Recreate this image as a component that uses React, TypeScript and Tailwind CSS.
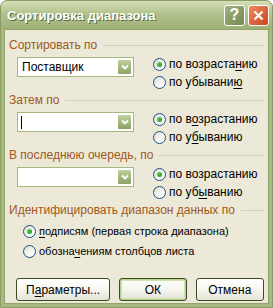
const font = { fontFamily: '"Liberation Sans", Arial, sans-serif' };

const Mn = ({ children }: { children: string }) => <span className="underline underline-offset-[2px]">{children}</span>;

const Radio = ({ checked, small, children }: { checked?: boolean; small?: boolean; children: React.ReactNode }) => (
  <div className="flex items-center h-[18px]">
    <div className="relative w-[13px] h-[13px] rounded-full border border-[#1c5180] bg-gradient-to-br from-[#dcd7cb] via-[#f4f3ee] to-white shrink-0">
      {checked && (
        <div className="absolute left-[3px] top-[3px] w-[5px] h-[5px] rounded-full bg-gradient-to-br from-[#55d751] to-[#1f9a1c]" />
      )}
    </div>
    <span className={`ml-[3px] ${small ? 'text-[11px]' : 'text-[12px]'} leading-none text-black whitespace-nowrap`}>{children}</span>
  </div>
);

const Combo = ({ value, caret }: { value?: string; caret?: boolean }) => (
  <div className="w-[117px] h-[20px] border border-[#a5b97e] bg-white flex items-center">
    <div className="flex-1 pl-[4px] text-[12px] leading-none text-black flex items-center">
      {value}
      {caret && <span className="inline-block w-[1px] h-[13px] bg-black ml-[-1px]" />}
    </div>
    <div className="w-[15px] h-[16px] mr-[1px] rounded-[2px] border border-white bg-gradient-to-b from-[#c1d1a0] via-[#a4b97e] to-[#8da266] flex items-center justify-center">
      <svg width="8" height="6" viewBox="0 0 8 6">
        <path d="M1 1.5 L4 4.5 L7 1.5" stroke="white" strokeWidth="1.8" fill="none" />
      </svg>
    </div>
  </div>
);

const GroupLabel = ({ text }: { text: string }) => (
  <div className="flex items-center h-[14px]">
    <span className="text-[12px] leading-none text-[#a0581a] whitespace-nowrap">{text}</span>
    <div className="flex-1 h-[1px] bg-[#d0d0bf] ml-[6px]" />
  </div>
);

const SortSection = ({ label, value, caret, up, down }: { label: string; value?: string; caret?: boolean; up: React.ReactNode; down: React.ReactNode }) => (
  <div className="mb-[2px]">
    <GroupLabel text={label} />
    <div className="flex mt-[3px]">
      <div className="ml-[8px] mt-[2px]">
        <Combo value={value} caret={caret} />
      </div>
      <div className="ml-[19px]">
        <Radio checked>{up}</Radio>
        <Radio>{down}</Radio>
      </div>
    </div>
  </div>
);

const Btn = ({ w, def, children }: { w: string; def?: boolean; children: React.ReactNode }) => (
  <div className={`${w} h-[23px] rounded-[3px] border border-[#3d4a27] bg-gradient-to-b from-white via-[#f6f6ef] to-[#e3e2d6] flex items-center justify-center text-[12px] text-black ${def ? 'shadow-[inset_0_0_0_1px_#b3d189,inset_0_0_0_2px_#cfe2b0]' : ''}`}>
    {children}
  </div>
);

export default function App() {
  return (
    <div className="w-[273px] h-[308px] flex flex-col rounded-t-[7px] bg-[#a6b97f] border border-[#8a9c66] overflow-hidden" style={font}>
      <div className="h-[28px] shrink-0 flex items-center bg-gradient-to-b from-[#d5e0b6] via-[#afc08a] to-[#9fb176] pl-[6px] pr-[3px]">
        <span
          className="flex-1 text-white font-bold text-[13px] leading-none"
          style={{ textShadow: '1px 1px 0 #5f6e3c' }}
        >
          Сортировка диапазона
        </span>
        <div className="w-[21px] h-[21px] rounded-[3px] border border-white bg-gradient-to-br from-[#a3b47f] to-[#72874f] flex items-center justify-center text-white font-bold text-[16px] leading-none">
          ?
        </div>
        <div className="w-[21px] h-[21px] ml-[3px] rounded-[3px] border border-white bg-gradient-to-br from-[#ec8a5e] to-[#c9431c] flex items-center justify-center">
          <svg width="11" height="11" viewBox="0 0 11 11">
            <path d="M1.5 1.5 L9.5 9.5 M9.5 1.5 L1.5 9.5" stroke="white" strokeWidth="2.2" />
          </svg>
        </div>
      </div>
      <div className="flex-1 ml-[3px] mr-[3px] mb-[3px] bg-[#ece9d8] border border-[#8fa36b] pt-[8px] pl-[4px] pr-[4px]">
        <SortSection
          label="Сортировать по"
          value="Поставщик"
          up={<>по возраста<Mn>н</Mn>ию</>}
          down={<>по убывани<Mn>ю</Mn></>}
        />
        <SortSection
          label="Затем по"
          caret
          up={<>по в<Mn>о</Mn>зрастанию</>}
          down={<>по у<Mn>б</Mn>ыванию</>}
        />
        <SortSection
          label="В последнюю очередь, по"
          up={<>по возрастанию</>}
          down={<>по уб<Mn>ы</Mn>ванию</>}
        />
        <GroupLabel text="Идентифицировать диапазон данных по" />
        <div className="ml-[14px] mt-[4px]">
          <div className="h-[20px] flex items-center">
            <Radio checked small><Mn>п</Mn>одписям (первая строка диапазона)</Radio>
          </div>
          <div className="h-[20px] flex items-center">
            <Radio small>обозна<Mn>ч</Mn>ениям столбцов листа</Radio>
          </div>
        </div>
        <div className="flex mt-[17px] ml-[7px] gap-[9px]">
          <Btn w="w-[95px]">П<Mn>а</Mn>раметры...</Btn>
          <Btn w="w-[68px]" def>ОК</Btn>
          <Btn w="w-[69px]">Отмена</Btn>
        </div>
      </div>
    </div>
  );
}
